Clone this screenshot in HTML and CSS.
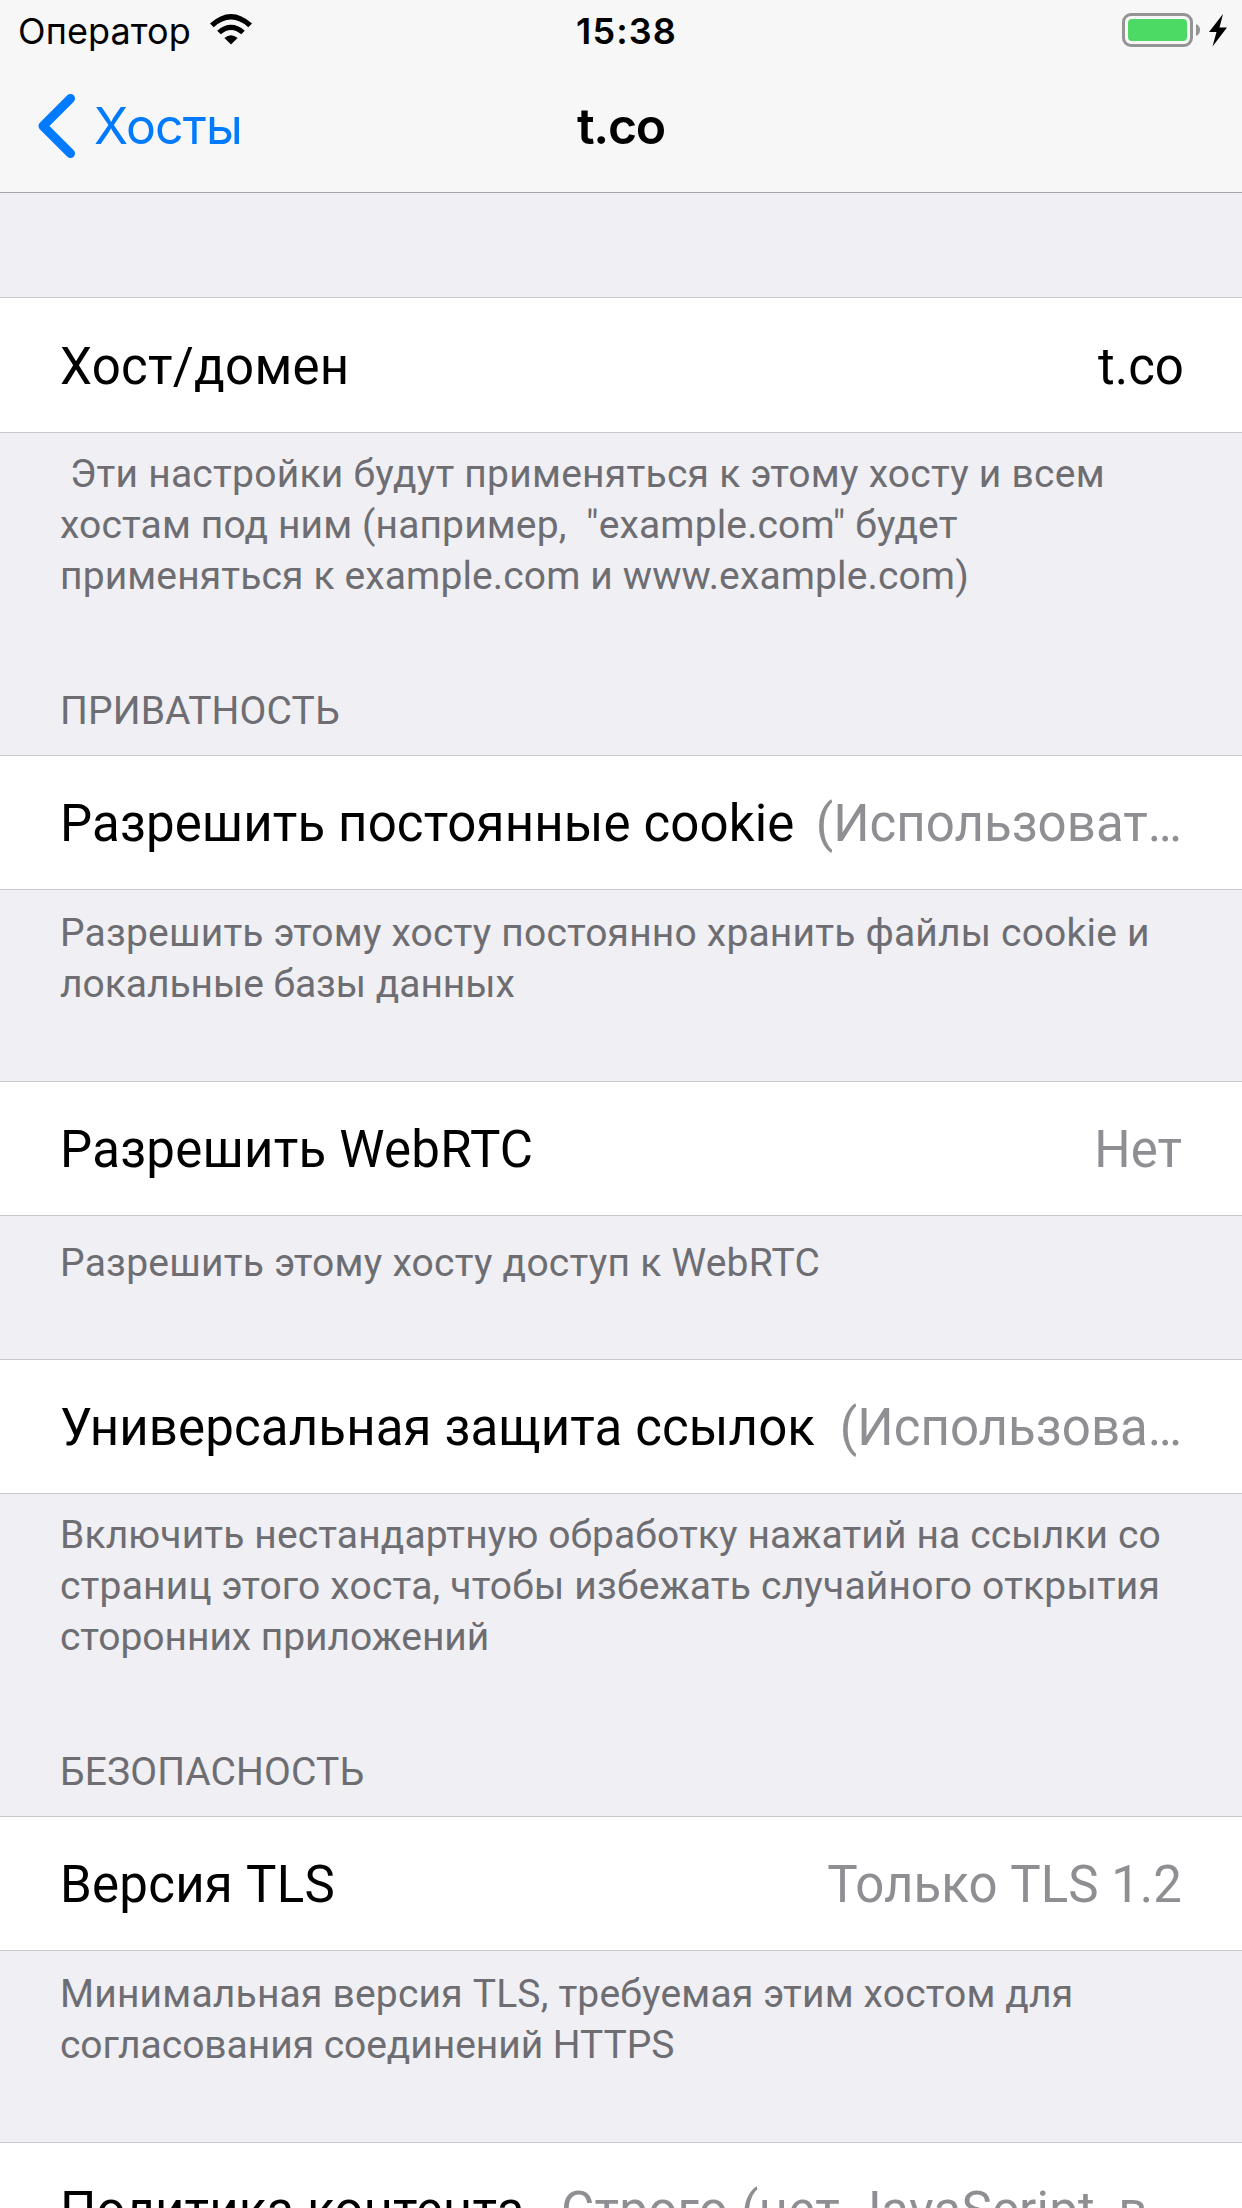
FILE: index.html
```html
<!DOCTYPE html>
<html lang="ru">
<head>
<meta charset="utf-8">
<title>t.co</title>
<link rel="stylesheet" href="styles.css">
</head>
<body>
<div class="screen">
  <header class="top">
    <div class="status">
      <div class="carrier"><span class="carrier-name">Оператор</span>
        <svg class="wifi" width="42" height="31" viewBox="0 0 42 31"><path d="M0 9.500Q21-9.500 42 9.500L38.300 13.200Q21-2 3.700 13.200Z"/><path d="M7.200 16.700Q21 5 34.800 16.700L31.200 20.300Q21 11.500 10.800 20.300Z"/><path d="M14.400 23.900Q21 18.500 27.600 23.900L21 30.500Z"/></svg>
      </div>
      <div class="clock">15:38</div>
      <div class="power">
        <svg width="109" height="36" viewBox="0 0 109 36"><rect x="1.500" y="1.500" width="68" height="31" rx="7.500" fill="none" stroke="#949495" stroke-width="3"/><rect x="6" y="6" width="59" height="22" rx="4" fill="#4cd964"/><path d="M74 11Q78 12.500 78 17T74 23Z" fill="#949495"/><path d="M101 1L87 19H94.500L90.500 33.500L105 14.500H97.500Z"/></svg>
      </div>
    </div>
    <nav class="nav">
      <a class="back"><svg width="38" height="64" viewBox="0 0 38 64"><path d="M32.500 4.500L5 32L32.500 59.500" fill="none" stroke="#007aff" stroke-width="9" stroke-linecap="round" stroke-linejoin="round"/></svg><span>Хосты</span></a>
      <h1 class="title">t.co</h1>
    </nav>
  </header>
  <main class="settings">
    <section class="group first">
      <div class="cell tall"><span class="label loose">Хост/домен</span><span class="value dark">t.co</span></div>
      <p class="note"><span class="line loose">&nbsp;Эти настройки будут применяться к этому хосту и всем</span><span class="line">хостам под ним (например,&nbsp; "example.com" будет</span><span class="line">применяться к example.com и www.example.com)</span></p>
    </section>
    <section class="group privacy">
      <h2 class="heading">ПРИВАТНОСТЬ</h2>
      <div class="cell"><span class="label">Разрешить постоянные cookie</span><span class="value">(Использоват…</span></div>
      <p class="note low"><span class="line medium">Разрешить этому хосту постоянно хранить файлы cookie и</span><span class="line tight">локальные базы данных</span></p>
    </section>
    <section class="group webrtc">
      <div class="cell"><span class="label loose">Разрешить WebRTC</span><span class="value">Нет</span></div>
      <p class="note single"><span class="line loose">Разрешить этому хосту доступ к WebRTC</span></p>
    </section>
    <section class="group links">
      <div class="cell"><span class="label">Универсальная защита ссылок</span><span class="value">(Использова…</span></div>
      <p class="note"><span class="line">Включить нестандартную обработку нажатий на ссылки со</span><span class="line medium">страниц этого хоста, чтобы избежать случайного открытия</span><span class="line tight">сторонних приложений</span></p>
    </section>
    <section class="group security">
      <h2 class="heading">БЕЗОПАСНОСТЬ</h2>
      <div class="cell"><span class="label loose">Версия TLS</span><span class="value">Только TLS 1.2</span></div>
      <p class="note low"><span class="line medium">Минимальная версия TLS, требуемая этим хостом для</span><span class="line tight">согласования соединений HTTPS</span></p>
    </section>
    <section class="group policy">
      <div class="cell"><span class="label">Политика контента</span><span class="value loose">Строго (нет JavaScript, в…</span></div>
    </section>
  </main>
</div>
</body>
</html>
```
FILE: styles.css
```css
* { box-sizing: border-box; margin: 0; padding: 0; }
body { background: #efeff4; font-family: Roboto, "Noto Sans", sans-serif; }
.screen { width: 1242px; height: 2208px; overflow: hidden; display: flex; flex-direction: column; }
.top { flex: none; height: 193px; background: #f7f7f7; border-bottom: 1px solid #a7a7aa; font-family: Inter, "Noto Sans", sans-serif; }
.status { height: 60px; display: grid; grid-template-columns: 1fr auto 1fr; align-items: center; padding: 2px 11px 0 18px; }
.carrier { display: flex; align-items: center; gap: 19px; font-size: 36px; letter-spacing: .1px; }
.wifi { margin-top: -3px; }
.clock { padding-left: 4px; font-size: 36px; font-weight: 600; letter-spacing: 1.1px; }
.power { display: flex; justify-content: flex-end; }
.nav { height: 132px; display: grid; grid-template-columns: 1fr auto 1fr; align-items: center; padding: 0 38px; }
.back { display: flex; align-items: center; gap: 18px; color: #007aff; font-size: 50px; letter-spacing: -.8px; }
.title { font-size: 50px; font-weight: 600; letter-spacing: -1.3px; }
.group { display: flex; flex-direction: column; }
.first { height: 323px; margin-top: 104px; }
.privacy { height: 461px; }
.webrtc { height: 278px; }
.links { height: 323px; }
.security { height: 460px; }
.heading { height: 135px; padding: 68px 60px 0; font-size: 39px; font-weight: 400; line-height: 46px; letter-spacing: .13px; color: #6d6d72; }
.security .heading { height: 134px; padding-top: 67px; }
.cell { flex: none; height: 135px; display: flex; justify-content: space-between; align-items: center; padding: 2px 60px 0; background: #fff; border-top: 1px solid #c8c7cc; border-bottom: 1px solid #c8c7cc; font-size: 51px; line-height: 60px; letter-spacing: .13px; white-space: nowrap; }
.tall { height: 136px; padding: 3px 58px 0 60px; }
.value { color: #8e8e93; letter-spacing: .03px; }
.dark { color: #000; }
.note { padding: 16px 60px 0; font-size: 39px; line-height: 51px; letter-spacing: .13px; color: #6d6d72; white-space: nowrap; }
.line { display: block; }
.low { padding-top: 18px; }
.single { padding-top: 22px; }
.loose { letter-spacing: .25px; }
.medium { letter-spacing: .19px; }
.tight { letter-spacing: -.05px; }
```
